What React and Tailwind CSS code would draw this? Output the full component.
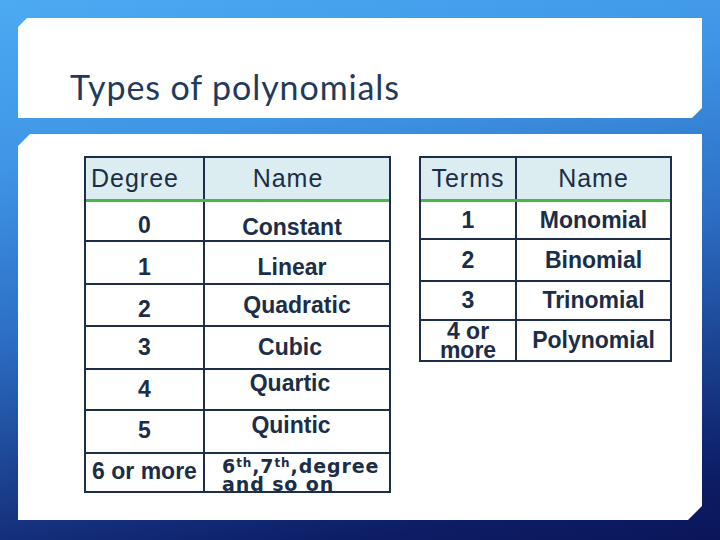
import React from "react"

// table rows: left = degree table, right = terms table
const degreeRows = [
    { d: "0", name: "Constant", h: "h-[38px]", dNudge: "pt-[8px]", nNudge: "pt-[12px] pr-[10px]" },
    { d: "1", name: "Linear", h: "h-[43px] border-t-2", dNudge: "pt-[10px]", nNudge: "pt-[10px] pr-[10px]" },
    { d: "2", name: "Quadratic", h: "h-[42px] border-t-2", dNudge: "pt-[9px]", nNudge: "pt-0" },
    { d: "3", name: "Cubic", h: "h-[43px] border-t-2", dNudge: "pt-0", nNudge: "pt-0 pr-[14px]" },
    { d: "4", name: "Quartic", h: "h-[41px] border-t-2", dNudge: "pt-0", nNudge: "pb-[12px] pr-[14px]" },
    { d: "5", name: "Quintic", h: "h-[43px] border-t-2", dNudge: "pb-[2px]", nNudge: "pb-[12px] pr-[12px]" },
]

const termRows = [
    { t: "1", name: "Monomial", h: "h-[36px]" },
    { t: "2", name: "Binomial", h: "h-[42px] border-t-2" },
    { t: "3", name: "Trinomial", h: "h-[39px] border-t-2" },
]

const App = () => {
    return (
        <div className="w-[720px] h-[540px] overflow-hidden bg-[linear-gradient(170deg,#4caaf2_0%,#3f95e6_25%,#2d70c6_50%,#1b418f_72%,#0d1d66_90%,#0b1659_100%)] pt-[18px] px-[18px]">

            {/* title panel */}
            <div className="h-[100px] bg-white [clip-path:polygon(9px_0,100%_0,100%_calc(100%_-_10px),calc(100%_-_10px)_100%,0_100%,0_9px)] pl-[52px] pt-[49px]">
                <h1 className="font-['Lato','Open_Sans',sans-serif] text-[34px] leading-[1.2] text-[#1f3a5c] tracking-[0.9px]">Types of polynomials</h1>
            </div>

            {/* content panel */}
            <div className="mt-[16px] h-[386px] bg-white [clip-path:polygon(12px_0,100%_0,100%_calc(100%_-_14px),calc(100%_-_14px)_100%,0_100%,0_12px)] pl-[66px] pt-[22px] flex gap-[28px] items-start font-['Liberation_Sans',Arial,sans-serif] text-[#1b2d47]">

                {/* degree table */}
                <div className="w-[307px] border-2 border-[#1c2e49] flex flex-col">
                    <div className="flex h-[44px] bg-[#dcedf1] border-b-[3px] border-[#4db848] text-[25px] tracking-[1px]">
                        <div className="w-[119px] border-r-2 border-[#1c2e49] flex items-center pl-[5px]">Degree</div>
                        <div className="flex-1 flex items-center justify-center pr-[18px]">Name</div>
                    </div>
                    {degreeRows.map((row) => (
                        <div key={row.d} className={`flex border-[#1c2e49] text-[23px] font-bold ${row.h}`}>
                            <div className={`w-[119px] border-r-2 border-[#1c2e49] flex items-center justify-center ${row.dNudge}`}>{row.d}</div>
                            <div className={`flex-1 flex items-center justify-center ${row.nNudge}`}>{row.name}</div>
                        </div>
                    ))}
                    <div className="flex h-[39px] border-t-2 border-[#1c2e49] font-bold">
                        <div className="w-[119px] border-r-2 border-[#1c2e49] flex items-center justify-center text-[23px] pb-[2px]">6 or more</div>
                        <div className="flex-1 overflow-hidden pl-[17px] pt-[3px] font-['DejaVu_Sans',Verdana,sans-serif] text-[19px] leading-[18px] tracking-[0.9px]">
                            6<sup className="text-[12px]">th</sup>,7<sup className="text-[12px]">th</sup>,degree<br />and so on
                        </div>
                    </div>
                </div>

                {/* terms table */}
                <div className="w-[253px] border-2 border-[#1c2e49] flex flex-col">
                    <div className="flex h-[44px] bg-[#dcedf1] border-b-[3px] border-[#4db848] text-[25px] tracking-[1px]">
                        <div className="w-[96px] border-r-2 border-[#1c2e49] flex items-center justify-center">Terms</div>
                        <div className="flex-1 flex items-center justify-center">Name</div>
                    </div>
                    {termRows.map((row) => (
                        <div key={row.t} className={`flex border-[#1c2e49] text-[23px] font-bold ${row.h}`}>
                            <div className="w-[96px] border-r-2 border-[#1c2e49] flex items-center justify-center">{row.t}</div>
                            <div className="flex-1 flex items-center justify-center">{row.name}</div>
                        </div>
                    ))}
                    <div className="flex h-[41px] border-t-2 border-[#1c2e49] text-[23px] font-bold">
                        <div className="w-[96px] border-r-2 border-[#1c2e49] flex items-center justify-center text-center leading-[19px]">4 or<br />more</div>
                        <div className="flex-1 flex items-center justify-center">Polynomial</div>
                    </div>
                </div>

            </div>
        </div>
    )
}

export default App
